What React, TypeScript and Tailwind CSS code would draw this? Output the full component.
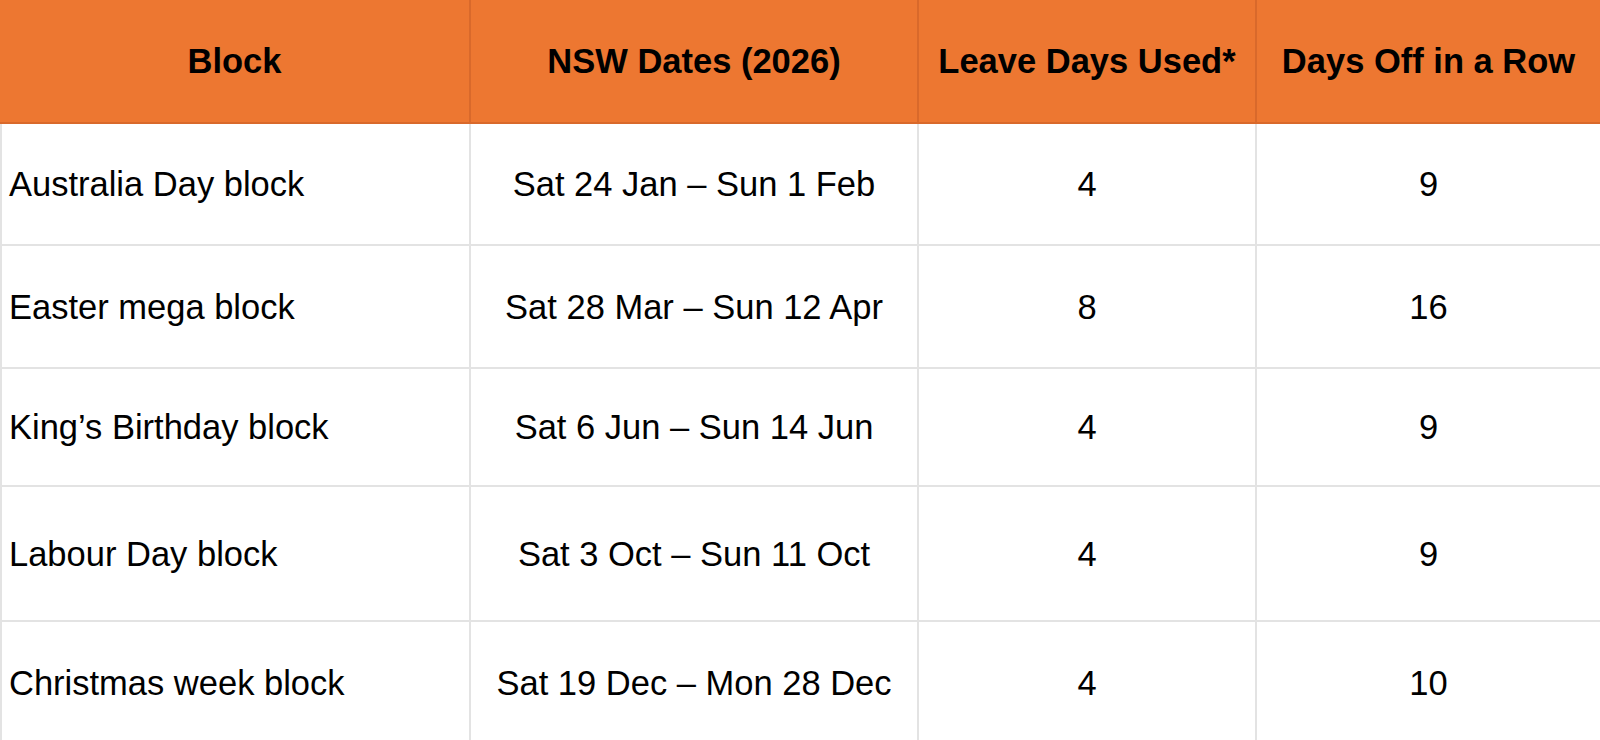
const headers = ["Block", "NSW Dates (2026)", "Leave Days Used*", "Days Off in a Row"];

const rows = [
  { block: "Australia Day block", dates: "Sat 24 Jan – Sun 1 Feb", leave: "4", off: "9", h: "h-[122px]" },
  { block: "Easter mega block", dates: "Sat 28 Mar – Sun 12 Apr", leave: "8", off: "16", h: "h-[123px]" },
  { block: "King’s Birthday block", dates: "Sat 6 Jun – Sun 14 Jun", leave: "4", off: "9", h: "h-[118px]" },
  { block: "Labour Day block", dates: "Sat 3 Oct – Sun 11 Oct", leave: "4", off: "9", h: "h-[135px]" },
  { block: "Christmas week block", dates: "Sat 19 Dec – Mon 28 Dec", leave: "4", off: "10", h: "h-[123px]" },
];

const cols = "grid grid-cols-[471px_448px_338px_343px]";

export default function App() {
  return (
    <div className="h-[740px] w-[1600px] overflow-hidden bg-white font-['Liberation_Sans',Arial,sans-serif] text-[34.5px] text-black">
      <div className={`${cols} h-[124px] border-b-2 border-[#d9692b] bg-[#ed7731]`}>
        {headers.map((h, i) => (
          <div
            key={h}
            className={`flex items-center justify-center pt-[2px] font-bold ${i < headers.length - 1 ? "border-r-2 border-[#d9692b]" : ""}`}
          >
            {h}
          </div>
        ))}
      </div>
      {rows.map((r) => (
        <div key={r.block} className={`${cols} ${r.h} border-b-2 border-[#e3e3e3]`}>
          <div className="flex items-center border-x-2 border-[#e3e3e3] pl-[7px] pt-[2px]">{r.block}</div>
          <div className="flex items-center justify-center border-r-2 border-[#e3e3e3] pt-[2px]">{r.dates}</div>
          <div className="flex items-center justify-center border-r-2 border-[#e3e3e3] pt-[2px]">{r.leave}</div>
          <div className="flex items-center justify-center pt-[2px]">{r.off}</div>
        </div>
      ))}
    </div>
  );
}
